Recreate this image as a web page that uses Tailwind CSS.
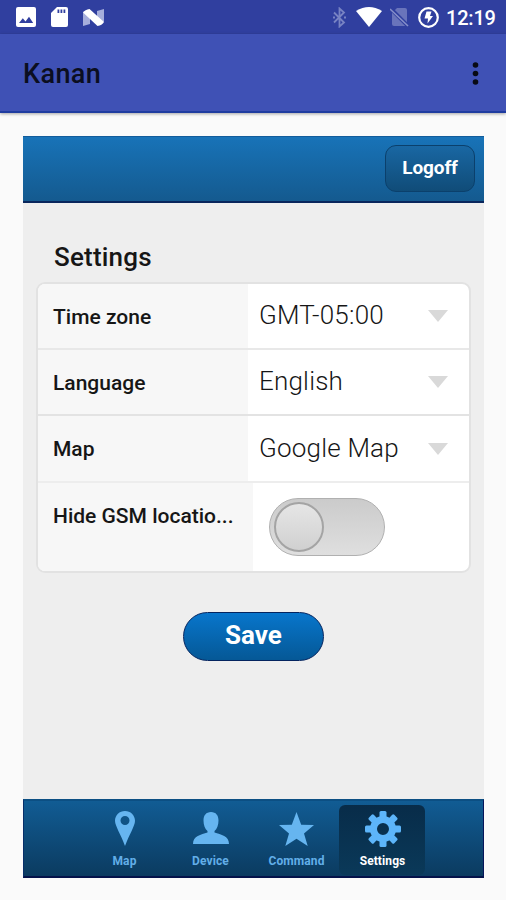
<!DOCTYPE html>
<html lang="en">
<head>
<meta charset="utf-8">
<title>Kanan</title>
<script src="https://cdn.jsdelivr.net/npm/@tailwindcss/browser@4"></script>
</head>
<body class="w-[506px] h-[900px] overflow-hidden bg-[#fafafa] font-[Roboto,sans-serif] text-[#161616] flex flex-col">
  <div class="h-[34px] shrink-0 bg-[#303f9f] flex items-center justify-between pl-[16px] pr-[11px]">
    <div class="flex items-center">
      <svg class="w-5 h-5" viewBox="0 0 20 20"><rect width="20" height="20" rx="2" fill="#fff"/><path d="M3 16l3.800-4.800 2.700 3.200L13 9.800l4.200 6.200z" fill="#303f9f"/></svg>
      <svg class="w-[17px] h-5 ml-[15px]" viewBox="0 0 17 20"><path d="M6 0h9a2 2 0 0 1 2 2v16a2 2 0 0 1-2 2H2a2 2 0 0 1-2-2V6z" fill="#fff"/><path d="M6.500 2.500h1.800v3.500H6.500zM9.500 2.500h1.800v3.500H9.500zM12.500 2.500h1.800v3.500h-1.800z" fill="#303f9f"/></svg>
      <svg class="w-[21px] h-[17px] ml-[15px]" viewBox="0 0 21 17"><path d="M0 3l7 4v8l-7 2zM21 0v13l-7-3V2z" fill="#a6aedb"/><path d="M0 3.500Q2 .5 6.500 0L21 13q-2 3.500-6.500 4z" fill="#fff"/></svg>
    </div>
    <div class="flex items-center">
      <svg class="w-[13px] h-[21px]" viewBox="0 0 13 21" fill="none" stroke="#7883c3" stroke-width="1.800"><path d="M1 5.500l10 10-4.500 4V1.500L11 5.500l-10 10"/><path d="M0 9.500h2v2H0zM11 9.500h2v2h-2z" fill="#7883c3" stroke="none"/></svg>
      <svg class="w-[26px] h-5 ml-[10px]" viewBox="0 0 26 20"><path d="M0 4Q13-4 26 4L13 20z" fill="#fff"/></svg>
      <svg class="w-[19px] h-5 ml-[8px]" viewBox="0 0 19 20"><path d="M7 1h8a2 2 0 0 1 2 2v16H4a2 2 0 0 1-2-2V6z" fill="#6974bb"/><path d="M0 1l18 18" stroke="#303f9f" stroke-width="4"/><path d="M0 2l18 17" stroke="#8790ca" stroke-width="1.600"/></svg>
      <svg class="w-[21px] h-[21px] ml-[9px]" viewBox="0 0 21 21"><circle cx="10.500" cy="10.500" r="9.300" fill="none" stroke="#fff" stroke-width="2.200"/><path d="M8.500 4.500h5l-1.500 4.500h3L9.500 16.500l.5-5H6.500z" fill="#fff"/></svg>
      <span class="w-[49px] ml-[7px] text-[20px] leading-[34px] font-medium text-white whitespace-nowrap tracking-[-0.2px] pt-[2px]">12:19</span>
    </div>
  </div>
  <header class="h-[79px] shrink-0 bg-[#3f51b5] border-b-2 border-[#1f3ca0] flex items-center justify-between pl-[23px] pr-[27px] shadow-[0_1px_3px_rgba(0,0,0,0.350)]">
    <h1 class="text-[27px] leading-[30px] font-medium text-[#0b0e20] pt-[3px] tracking-[0.400px]">Kanan</h1>
    <svg class="w-[7px] h-[23px] mt-[2px]" viewBox="0 0 7 23" fill="#080a14"><circle cx="3.500" cy="3" r="2.800"/><circle cx="3.500" cy="11.500" r="2.800"/><circle cx="3.500" cy="20" r="2.800"/></svg>
  </header>

  <main class="mt-[23px] ml-[23px] w-[461px] h-[742px] shrink-0 bg-[#eeeeee] flex flex-col">
    <div class="h-[67px] shrink-0 bg-linear-to-b from-[#1873b8] to-[#145a8f] border-t border-t-[#125c9b] border-b-2 border-b-[#09265c] flex justify-end pt-[8px] pr-[9px]">
      <button class="w-[90px] h-[47px] rounded-[11px] border border-[#0b406c] bg-linear-to-b from-[#1967a3] to-[#104c78] text-white text-[19px] leading-[43px] pb-[2px] font-bold text-center whitespace-nowrap tracking-[-0.1px]">Logoff</button>
    </div>
    <div class="flex-1 px-[13px] flex flex-col">
      <h2 class="mt-[39px] ml-[18px] h-[40px] text-[26px] leading-[31px] font-medium tracking-[0.200px]">Settings</h2>
      <div class="w-[435px] h-[291px] rounded-[9px] border-2 border-[#e2e2e2] bg-white overflow-hidden text-[21px] font-medium">
        <div class="h-[66px] border-b-2 border-[#e8e8e8] flex">
          <div class="w-[210px] bg-[#f7f7f7] pl-[15px] leading-[66px]">Time zone</div>
          <div class="flex-1 flex items-center justify-between pl-[11px] pr-[21px] text-[26px] font-light tracking-[0.200px]"><span class="-mt-[2px]">GMT-05:00</span><svg class="w-5 h-3" viewBox="0 0 20 12"><path d="M0 0h20L10 12z" fill="#d9d9d9"/></svg></div>
        </div>
        <div class="h-[66px] border-b-2 border-[#e3e3e3] flex">
          <div class="w-[210px] bg-[#f7f7f7] pl-[15px] leading-[66px]">Language</div>
          <div class="flex-1 flex items-center justify-between pl-[11px] pr-[21px] text-[26px] font-light tracking-[0.200px]"><span class="-mt-[2px]">English</span><svg class="w-5 h-3" viewBox="0 0 20 12"><path d="M0 0h20L10 12z" fill="#d9d9d9"/></svg></div>
        </div>
        <div class="h-[67px] border-b-2 border-[#ededed] flex">
          <div class="w-[210px] bg-[#f7f7f7] pl-[15px] leading-[66px]">Map</div>
          <div class="flex-1 flex items-center justify-between pl-[11px] pr-[21px] text-[26px] font-light tracking-[0.200px]"><span>Google Map</span><svg class="w-5 h-3" viewBox="0 0 20 12"><path d="M0 0h20L10 12z" fill="#d9d9d9"/></svg></div>
        </div>
        <div class="h-[88px] flex">
          <div class="w-[215px] bg-[#f7f7f7] pl-[15px] leading-[66px] whitespace-nowrap">Hide GSM locatio...</div>
          <div class="flex-1 pt-[15px] pl-[16px]">
            <div class="w-[116px] h-[58px] rounded-full border border-[#b0b0b0] bg-linear-to-b from-[#cbcbcb] to-[#dfdfdf] flex items-center pl-[4px]">
              <div class="w-[50px] h-[50px] rounded-full border-2 border-[#a4a4a4] bg-linear-to-b from-[#e6e6e6] to-[#d0d0d0]"></div>
            </div>
          </div>
        </div>
      </div>
      <button class="mt-[39px] ml-[147px] w-[141px] h-[49px] rounded-full border border-[#04245f] bg-linear-to-b from-[#0876cc] to-[#055896] text-white text-[26px] leading-[45px] pb-[2px] font-bold">Save</button>
    </div>
    <nav class="h-[79px] shrink-0 bg-linear-to-b from-[#115c94] to-[#0b3b60] border-x border-y-2 border-t-[#0c4f83] border-b-[#04124a] border-l-[#082e69] border-r-[#06155a] flex pl-[57px] text-[12px] leading-[14px] font-bold text-[#62aee8] text-center">
      <div class="w-[86px] flex flex-col items-center pt-[10px] pl-px">
        <svg class="w-5 h-[35px]" viewBox="0 0 20 35"><path fill-rule="evenodd" d="M10 0C4.500 0 0 4.200 0 9.800 0 15 6 24 10 35 14 24 20 15 20 9.800 20 4.200 15.500 0 10 0zM10 5a4.500 4.500 0 1 0 0 9 4.500 4.500 0 0 0 0-9z" fill="#66b5f0"/></svg>
        <span class="mt-[8px] tracking-[0.100px]">Map</span>
      </div>
      <div class="w-[86px] flex flex-col items-center pt-[11px] pl-px">
        <svg class="w-9 h-8" viewBox="0 0 36 32"><path d="M18 0C13 0 10.500 3.500 10.500 8.500c0 4.500 1.500 8.500 4 10.500v1.500C8 22.500 0 24 0 32h36c0-8-8-9.500-14.500-11.500V19c2.500-2 4-6 4-10.500C25.500 3.500 23 0 18 0z" fill="#66b5f0"/></svg>
        <span class="mt-[10px] tracking-[0.100px]">Device</span>
      </div>
      <div class="w-[86px] flex flex-col items-center pt-[11px] pl-px">
        <svg class="w-[35px] h-[34px]" viewBox="0 0 35 34"><path d="M17.500 0l4.700 12.800L35 13l-10 8.500L28.700 34 17.500 26.700 6.300 34 10 21.500 0 13l12.800-.2z" fill="#66b5f0"/></svg>
        <span class="mt-[8px] tracking-[0.100px]">Command</span>
      </div>
      <div class="mt-[4px] w-[86px] h-[70px] rounded-[6px] bg-linear-to-b from-[#082c49] to-[#0a3959] flex flex-col items-center pt-[6px] pl-px text-white">
        <svg class="w-9 h-9" viewBox="-18 -18 36 36" fill="#5db5fa"><path fill-rule="evenodd" d="M0-13a13 13 0 1 0 0 26 13 13 0 0 0 0-26zM0-6a6 6 0 1 1 0 12 6 6 0 0 1 0-12z"/><g id="teeth"><rect x="-3.500" y="-18" width="7" height="8" rx="1.500"/><rect x="-3.500" y="10" width="7" height="8" rx="1.500"/><rect x="-18" y="-3.500" width="8" height="7" rx="1.500"/><rect x="10" y="-3.500" width="8" height="7" rx="1.500"/></g><use href="#teeth" transform="rotate(45)"/></svg>
        <span class="mt-[7px] tracking-[0.100px]">Settings</span>
      </div>
    </nav>
  </main>
</body>
</html>
